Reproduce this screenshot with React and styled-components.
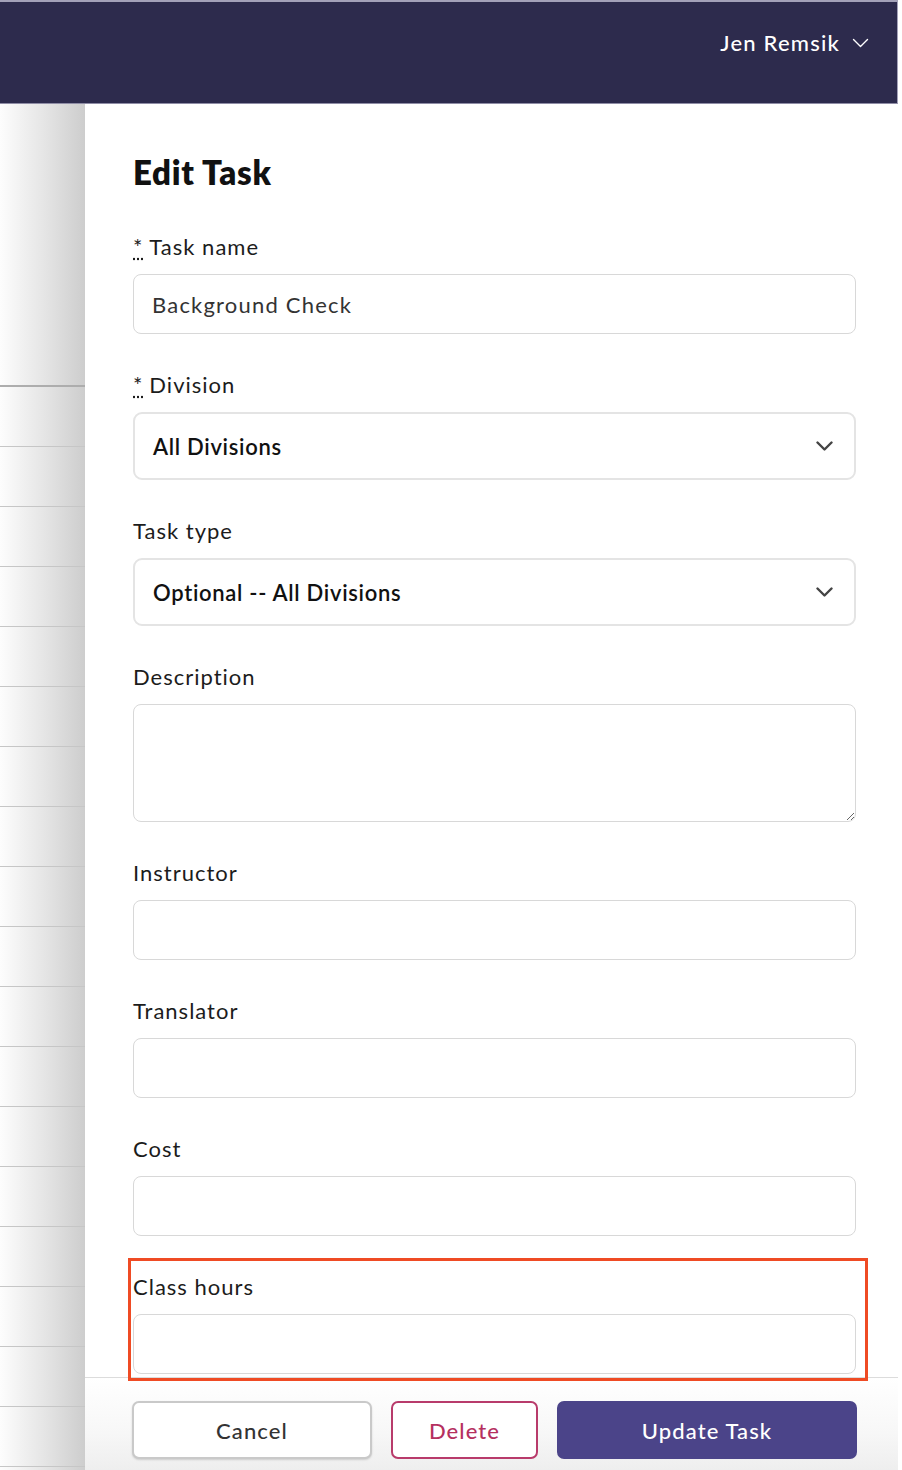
import styled, { createGlobalStyle } from 'styled-components';

const GlobalStyle = createGlobalStyle`
  html, body {
    margin: 0;
    padding: 0;
    background: #fff;
  }
  * {
    box-sizing: border-box;
  }
  body {
    font-family: Lato, "Open Sans", "Liberation Sans", sans-serif;
  }
`;

const Page = styled.div`
  width: 898px;
  height: 1470px;
  display: flex;
  flex-direction: column;
  overflow: hidden;
`;

const Header = styled.header`
  height: 104px;
  flex: none;
  background: #2d2b4d;
  border-top: 2px solid #a3a1b8;
  border-right: 1px solid #a3a1b8;
  border-bottom: 1px solid #8f8da6;
  display: flex;
  justify-content: flex-end;
  align-items: flex-start;
  padding: 27px 28px 0 0;
`;

const UserMenu = styled.button`
  display: flex;
  align-items: center;
  gap: 12px;
  background: none;
  border: none;
  padding: 0;
  color: #fff;
  font-family: inherit;
  font-size: 22px;
  font-weight: 500;
  line-height: 28px;
  letter-spacing: 1.2px;
  cursor: pointer;
`;

const Body = styled.div`
  flex: 1;
  display: flex;
  min-height: 0;
`;

const Rail = styled.div`
  width: 85px;
  flex: none;
  display: flex;
  flex-direction: column;
  background: linear-gradient(to right, #fdfdfd 0%, #e6e6e6 50%, #cdcdcd 100%);
`;

const RailTop = styled.div`
  height: 283px;
  flex: none;
  border-bottom: 2px solid #adadad;
`;

const RailRow = styled.div`
  height: 60px;
  flex: none;
  border-bottom: 1px solid #c6c6c6;
`;

const Drawer = styled.div`
  width: 813px;
  flex: none;
  display: flex;
  flex-direction: column;
  background: #fff;
`;

const Form = styled.div`
  flex: 1;
  min-height: 0;
  padding: 48px 42px 0 48px;
  display: flex;
  flex-direction: column;
`;

const Title = styled.h1`
  margin: 0 0 41px;
  font-size: 33px;
  line-height: 40px;
  font-weight: 800;
  letter-spacing: 0.7px;
  color: #111;
`;

const Field = styled.div`
  display: flex;
  flex-direction: column;
  gap: 13px;
  margin-bottom: ${p => p.$gap ?? 37}px;
`;

const Label = styled.label`
  font-size: 22px;
  line-height: 28px;
  letter-spacing: 1px;
  color: #1c1c1c;
`;

const Req = styled.abbr`
  text-decoration: underline dotted;
  text-underline-offset: 3px;
  margin-right: 6px;
`;

const TextInput = styled.input`
  height: 60px;
  width: 100%;
  border: 1px solid #d8d8d8;
  border-radius: 8px;
  padding: 0 18px;
  font-family: inherit;
  font-size: 22px;
  letter-spacing: 1.2px;
  color: #333;
  outline: none;
`;

const TextArea = styled.textarea`
  height: 118px;
  width: 100%;
  border: 1px solid #d8d8d8;
  border-radius: 8px;
  padding: 14px 18px;
  font-family: inherit;
  font-size: 22px;
  resize: vertical;
  outline: none;
  display: block;
`;

const Select = styled.div`
  height: 68px;
  border: 2px solid #e4e4e4;
  border-radius: 9px;
  display: flex;
  align-items: center;
  justify-content: space-between;
  padding: 0 21px 0 18px;
  font-size: 22px;
  font-weight: 600;
  letter-spacing: 0.7px;
  color: #111;
  cursor: pointer;
`;

const Highlight = styled.div`
  position: relative;
  z-index: 2;
  margin: 22px -12px 0 -5px;
  padding: 12px 9px 4px 2px;
  border: 3px solid #ef4b24;
`;

const Footer = styled.footer`
  height: 93px;
  flex: none;
  border-top: 1px solid #dcdcdc;
  background: linear-gradient(to bottom, #ffffff 0%, #f7f7f7 60%, #eeeeee 100%);
  display: flex;
  align-items: flex-start;
  gap: 19px;
  padding: 23px 41px 0 47px;
`;

const Button = styled.button`
  height: 58px;
  width: ${p => p.$w}px;
  flex: none;
  border-radius: 7px;
  font-family: inherit;
  font-size: 22px;
  font-weight: 500;
  letter-spacing: 1.1px;
  cursor: pointer;
  border: 2px solid ${p => p.$border};
  background: ${p => p.$bg};
  color: ${p => p.$color};
  box-shadow: ${p => (p.$shadow ? '0 1px 2px rgba(0,0,0,0.15)' : 'none')};
`;

function Chevron({ color, w = 17, h = 10, stroke = 2.4 }) {
  return (
    <svg width={w} height={h} viewBox="0 0 17 10" fill="none">
      <path d="M1.5 1.5 L8.5 8.5 L15.5 1.5" stroke={color} strokeWidth={stroke} strokeLinecap="round" strokeLinejoin="round" />
    </svg>
  );
}

const railRows = Array.from({ length: 18 });

function App() {
  return (
    <Page>
      <GlobalStyle />
      <Header>
        <UserMenu>
          Jen Remsik
          <Chevron color="#fff" stroke={1.4} />
        </UserMenu>
      </Header>
      <Body>
        <Rail>
          <RailTop />
          {railRows.map((_, i) => (
            <RailRow key={i} />
          ))}
        </Rail>
        <Drawer>
          <Form>
            <Title>Edit Task</Title>

            <Field>
              <Label><Req title="required">*</Req>Task name</Label>
              <TextInput defaultValue="Background Check" />
            </Field>

            <Field>
              <Label><Req title="required">*</Req>Division</Label>
              <Select>
                All Divisions
                <Chevron color="#444" />
              </Select>
            </Field>

            <Field>
              <Label>Task type</Label>
              <Select>
                Optional -- All Divisions
                <Chevron color="#444" />
              </Select>
            </Field>

            <Field>
              <Label>Description</Label>
              <TextArea />
            </Field>

            <Field>
              <Label>Instructor</Label>
              <TextInput />
            </Field>

            <Field>
              <Label>Translator</Label>
              <TextInput />
            </Field>

            <Field $gap={0}>
              <Label>Cost</Label>
              <TextInput />
            </Field>

            <Highlight>
              <Field $gap={0}>
                <Label>Class hours</Label>
                <TextInput />
              </Field>
            </Highlight>
          </Form>
          <Footer>
            <Button $w={240} $border="#c9c9c9" $bg="#fff" $color="#333" $shadow>Cancel</Button>
            <Button $w={147} $border="#b83b6b" $bg="#fff" $color="#b5305f">Delete</Button>
            <Button $w={300} $border="#4b4489" $bg="#4b4489" $color="#fff">Update Task</Button>
          </Footer>
        </Drawer>
      </Body>
    </Page>
  );
}

export default App;
